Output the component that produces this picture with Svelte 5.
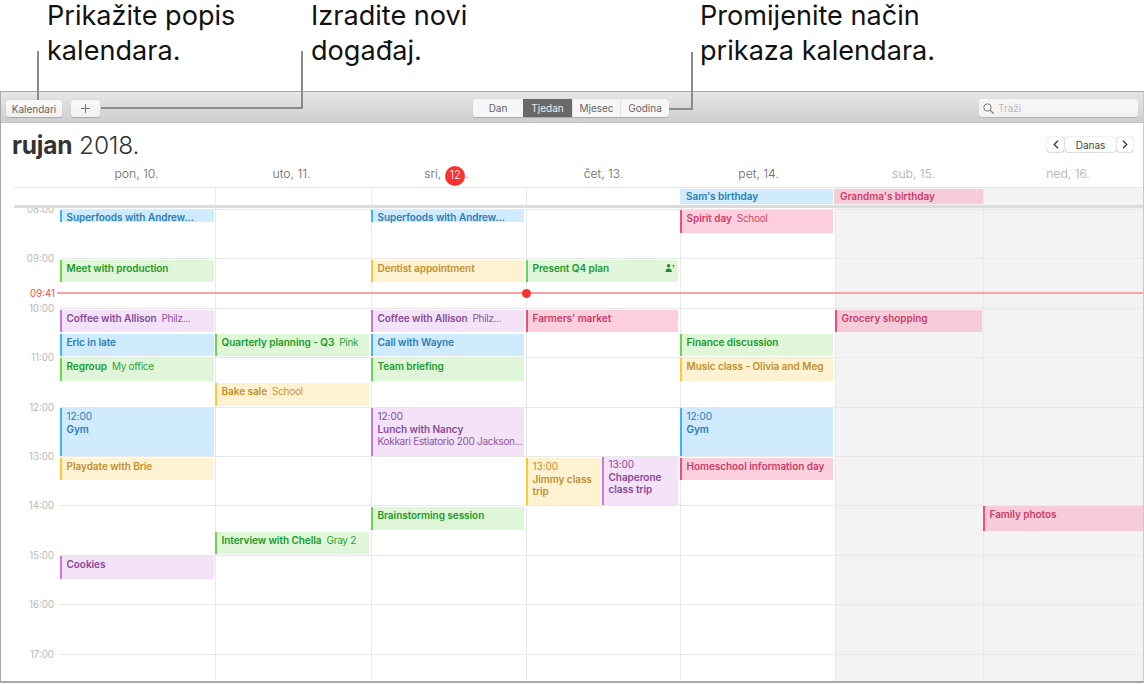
<script>
  const days = [
    { label: 'pon, 10.' },
    { label: 'uto, 11.' },
    { label: 'sri,', today: '12' },
    { label: 'čet, 13.' },
    { label: 'pet, 14.' },
    { label: 'sub, 15.', off: true },
    { label: 'ned, 16.', off: true }
  ];

  // top / bottom are window-canvas y values of each event in its day column
  const events = [
    [0, 210, 222, 'blue', 'Superfoods with Andrew...'],
    [0, 260, 282, 'green', 'Meet with production'],
    [0, 310, 332, 'purple', 'Coffee with Allison', 'Philz...'],
    [0, 334, 356, 'blue', 'Eric in late'],
    [0, 358, 381, 'green', 'Regroup', 'My office'],
    [0, 408, 456, 'blue', 'Gym', '', '12:00'],
    [0, 458, 480, 'yellow', 'Playdate with Brie'],
    [0, 556, 579, 'purple', 'Cookies'],
    [1, 334, 356, 'green', 'Quarterly planning - Q3', 'Pink'],
    [1, 383, 405.5, 'yellow', 'Bake sale', 'School'],
    [1, 532, 553.5, 'green', 'Interview with Chella', 'Gray 2'],
    [2, 210, 222, 'blue', 'Superfoods with Andrew...'],
    [2, 260, 282, 'yellow', 'Dentist appointment'],
    [2, 310, 332, 'purple', 'Coffee with Allison', 'Philz...'],
    [2, 334, 356, 'blue', 'Call with Wayne'],
    [2, 358, 381, 'green', 'Team briefing'],
    [2, 408, 456, 'purple', 'Lunch with Nancy', 'Kokkari Estiatorio 200 Jackson...', '12:00', true],
    [2, 507, 530, 'green', 'Brainstorming session'],
    [3, 260, 282, 'green', 'Present Q4 plan', '', '', false, true],
    [3, 310, 332, 'pink', "Farmers' market"],
    [4, 210, 233, 'pink', 'Spirit day', 'School'],
    [4, 334, 356, 'green', 'Finance discussion'],
    [4, 358, 381, 'yellow', 'Music class - Olivia and Meg'],
    [4, 408, 456, 'blue', 'Gym', '', '12:00'],
    [4, 458, 480, 'pink', 'Homeschool information day'],
    [5, 310, 332, 'pink wk', 'Grocery shopping'],
    [6, 506, 531, 'pink wk', 'Family photos']
  ].map(([col, y0, y1, color, title, note, time, stack, icon]) => ({
    col, top: y0 - 208, height: y1 - y0, color, title, note, time, stack, icon
  }));

  const hours = ['08:00', '09:00', '10:00', '11:00', '12:00', '13:00', '14:00', '15:00', '16:00', '17:00'];
</script>

<div class="page">
  <header class="notes">
    <p class="note n1">Prikažite popis<br />kalendara.</p>
    <p class="note n2">Izradite novi<br />događaj.</p>
    <p class="note n3">Promijenite način<br />prikaza kalendara.</p>
  </header>

  <div class="window">
    <div class="toolbar">
      <div class="left">
        <button class="btn cal">Kalendari</button>
        <button class="btn add" aria-label="Novi događaj">
          <svg width="9" height="9" viewBox="0 0 9 9"><path d="M4.5 0v9M0 4.5h9" stroke="#777" stroke-width="1" fill="none" /></svg>
        </button>
      </div>
      <div class="seg">
        <span class="s1">Dan</span>
        <span class="s2 on">Tjedan</span>
        <span class="s3">Mjesec</span>
        <span class="s4">Godina</span>
      </div>
      <div class="search">
        <svg width="11" height="11" viewBox="0 0 11 11"><circle cx="4.5" cy="4.5" r="3.7" stroke="#777" stroke-width="1" fill="none" /><path d="M7.3 7.3l3.2 3.2" stroke="#777" stroke-width="1.2" fill="none" /></svg>
        <span>Traži</span>
      </div>
    </div>

    <div class="titlerow">
      <h1><b>rujan</b> 2018.</h1>
      <div class="nav">
        <button class="nb" aria-label="Prethodni">
          <svg width="6" height="9" viewBox="0 0 6 9"><path d="M5 .8L1.2 4.500 5 8.200" stroke="#333" stroke-width="1.2" fill="none" /></svg>
        </button>
        <button class="nb danas">Danas</button>
        <button class="nb last" aria-label="Sljedeći">
          <svg width="6" height="9" viewBox="0 0 6 9"><path d="M1 .8l3.800 3.700L1 8.200" stroke="#333" stroke-width="1.2" fill="none" /></svg>
        </button>
      </div>
    </div>

    <div class="dayrow">
      <div></div>
      {#each days as d}
        <div class="dayname" class:off={d.off}>
          {d.label}{#if d.today}<span class="today">{d.today}</span>.{/if}
        </div>
      {/each}
    </div>

    <div class="cols allday">
      <div></div>
      {#each days as d, i}
        <div class="adcell c{i}" class:weekend={d.off}>
          {#if i === 4}<div class="adev sam blue">Sam's birthday</div>{/if}
          {#if i === 5}<div class="adev gran pink wk">Grandma's birthday</div>{/if}
        </div>
      {/each}
    </div>

    <div class="grid">
      <div class="cols daycols">
        <div class="gutter">
          {#each hours as h}<div class="tlabel">{h}</div>{/each}
        </div>
        {#each days as d, i}
          <div class="day c{i}" class:weekend={d.off}>
            {#each events.filter((e) => e.col === i) as e}
              <div class="ev {e.color}" class:short={e.height < 15} style="top:{e.top}px;height:{e.height}px">
                {#if e.time}<div class="time">{e.time}</div>{/if}
                {#if e.stack}
                  <div class="tt">{e.title}</div>
                  <div class="sub">{e.note}</div>
                {:else}
                  <div class="line"><span class="tt">{e.title}</span>{#if e.note}<span class="sub">{e.note}</span>{/if}</div>
                {/if}
                {#if e.icon}
                  <svg class="inv" width="10" height="8" viewBox="0 0 10 8">
                    <circle cx="3.6" cy="1.8" r="1.7" fill="#1f8a30" />
                    <path d="M.5 8c0-2.6 1.2-3.6 3.1-3.6S6.800 5.400 6.800 8z" fill="#1f8a30" />
                    <path d="M8.500 4V1M7.500 1.900l1-1 1 1" stroke="#1f8a30" stroke-width=".7" fill="none" />
                  </svg>
                {/if}
              </div>
            {/each}
            {#if i === 3}
              <div class="trip yellow ev"><div class="time">13:00</div><div class="tt">Jimmy class trip</div></div>
              <div class="trip2 purple ev"><div class="time">13:00</div><div class="tt">Chaperone class trip</div></div>
            {/if}
          </div>
        {/each}
      </div>
      <div class="hourlines">
        {#each hours as h}<div class="hl"></div>{/each}
      </div>
      <div class="now">
        <span class="nowt">09:41</span>
        <span class="nowdot"></span>
      </div>
    </div>
  </div>

  <i class="lead l1"></i>
  <i class="lead l2"></i>
  <i class="lead l3"></i>
</div>

<style>
  :global(body) {
    margin: 0;
    background: #fff;
  }
  .page {
    position: relative;
    width: 1144px;
    height: 684px;
    overflow: hidden;
    font-family: Inter, "Liberation Sans", sans-serif;
    color: #222;
  }
  .notes {
    height: 91px;
    display: flex;
    padding-left: 47px;
    box-sizing: border-box;
  }
  .note {
    margin: -2px 0 0;
    font-size: 27.100px;
    line-height: 35px;
    color: #111;
  }
  .n1 { width: 264px; }
  .n2 { width: 389px; }

  .lead { position: absolute; background: #8b8b8b; display: block; }
  .l1 { left: 37px; top: 51px; width: 2px; height: 49px; }
  .l2 { left: 101px; top: 51px; width: 202px; height: 58px; background: none; border-right: 2px solid #8b8b8b; border-bottom: 2px solid #8b8b8b; box-sizing: border-box; }
  .l3 { left: 669px; top: 52px; width: 24px; height: 58px; background: none; border-right: 2px solid #8b8b8b; border-bottom: 2px solid #8b8b8b; box-sizing: border-box; }

  .window {
    height: 592px;
    box-sizing: border-box;
    border-left: 1px solid #a9a9a9;
    border-bottom: 2px solid #a9a9a9;
    border-right: 1px solid #c8c8c8;
    border-top: 1px solid #a9a9a9;
    display: flex;
    flex-direction: column;
  }
  .toolbar {
    flex: none;
    height: 31px;
    box-sizing: border-box;
    padding: 8px 5px 0 5px;
    background: linear-gradient(#e6e6e6, #cfcfcf);
    border-bottom: 1px solid #c2c2c2;
    display: grid;
    grid-template-columns: 467px 196px 1fr;
    align-items: start;
  }
  .left { display: flex; gap: 9px; }
  .btn {
    height: 17px;
    padding: 0;
    border: 0;
    border-radius: 3px;
    background: linear-gradient(#fafafa, #f0f0f0);
    box-shadow: 0 0.500px 1px rgba(0,0,0,.2);
    font: 10px Inter, sans-serif;
    color: #666;
    display: flex;
    align-items: center;
    justify-content: center;
  }
  .cal { width: 56px; }
  .add { width: 29px; }
  .seg {
    display: grid;
    grid-template-columns: 50px 49px 48px 49px;
    height: 18px;
    margin-top: -1px;
    border-radius: 3px;
    overflow: hidden;
    background: #f6f6f6;
    box-shadow: 0 0.500px 1px rgba(0,0,0,.2);
    font-size: 10px;
    color: #666;
  }
  .seg span {
    display: flex;
    align-items: center;
    justify-content: center;
    border-left: 1px solid #e4e4e4;
  }
  .seg .s1 { border-left: 0; }
  .seg .on { background: #696969; color: #eee; border-left: 0; }
  .search {
    justify-self: end;
    width: 159px;
    height: 18px;
    margin-top: -1px;
    box-sizing: border-box;
    padding-left: 4px;
    display: flex;
    align-items: center;
    gap: 4px;
    border-radius: 3px;
    background: linear-gradient(#f7f7f7, #f1f1f1);
    box-shadow: 0 0.500px 1px rgba(0,0,0,.15);
    font-size: 10px;
    color: #b9b9b9;
  }
  .titlerow {
    flex: none;
    height: 36px;
    box-sizing: border-box;
    padding: 0 10px 0 11px;
    display: flex;
    justify-content: space-between;
    align-items: flex-start;
  }
  h1 {
    margin: 6px 0 0;
    font-size: 24.500px;
    line-height: 32px;
    font-weight: 300;
    color: #333;
    letter-spacing: -0.2px;
  }
  h1 b { font-weight: 700; }
  .nav { display: flex; gap: 1px; margin-top: 14px; }
  .nb {
    width: 17px;
    height: 15px;
    padding: 0;
    border: 0;
    border-radius: 3px;
    background: #fff;
    box-shadow: 0 0 1px rgba(0,0,0,.5), 0 1px 1px rgba(0,0,0,.1);
    font: 10px Inter, sans-serif;
    color: #444;
    display: flex;
    align-items: center;
    justify-content: center;
  }
  .danas { width: 51px; }
  .last { width: 16px; }

  .cols {
    display: grid;
    grid-template-columns: 59px 155px 156px 155px 154px 155px 148px 1fr;
  }
  .dayrow {
    flex: none;
    height: 28px;
    display: grid;
    grid-template-columns: 58px 155px 155px 155px 159px 151px 159px 1fr;
  }
  .dayname {
    text-align: center;
    font-size: 12.200px;
    line-height: 29px;
    color: #666;
    font-weight: 300;
    white-space: nowrap;
  }
  .dayname.off { color: #aaa; }
  .today {
    display: inline-flex;
    width: 20px;
    height: 20px;
    margin-left: 4px;
    border-radius: 50%;
    background: #fb3232;
    color: #fff;
    align-items: center;
    justify-content: center;
    font-size: 11px;
    line-height: 1;
    vertical-align: -1px;
  }
  .allday {
    flex: none;
    height: 17px;
    margin-left: 13px;
    grid-template-columns: 46px 155px 156px 155px 154px 155px 148px 1fr;
    border-top: 1px solid #e9e9e9;
    border-bottom: 3px solid #dcdcdc;
  }
  .adcell { border-left: 1px solid #e9e9e9; padding: 1px 0 0 0; }
  .adcell.c0 { border-left: 0; }
  .adcell.weekend { background: #f3f3f3; }
  .adev {
    height: 15px;
    padding-left: 6px;
    font-size: 10px;
    letter-spacing: -0.05px;
    line-height: 15px;
    font-weight: 600;
  }
  .sam { margin: 0 2px 0 -1px; }
  .gran { margin: 0 0 0 -2px; }

  .grid {
    position: relative;
    flex: 1;
    overflow: hidden;
    min-height: 0;
  }
  .daycols { height: 100%; }
  .gutter { display: flex; flex-direction: column; margin-top: -5px; }
  .tlabel {
    height: 49.400px;
    flex: none;
    box-sizing: border-box;
    padding-right: 6px;
    text-align: right;
    font-size: 9.700px;
    line-height: 14px;
    color: #b8b8b8;
  }
  .day {
    position: relative;
    border-left: 1px solid #e9e9e9;
  }
  .day.c0 { border-left: 0; }
  .day.weekend { background: #f3f3f3; }
  .hourlines {
    position: absolute;
    left: 59px;
    right: 0;
    top: 1px;
    pointer-events: none;
  }
  .hl { height: 49.400px; box-sizing: border-box; border-top: 1px solid #e9e9e9; }
  .now {
    position: absolute;
    left: 56px;
    right: 0;
    top: 84px;
    height: 2px;
    background: #f9a3a3;
    z-index: 3;
  }
  .nowt {
    position: absolute;
    right: 100%;
    top: -5px;
    width: 40px;
    text-align: right;
    padding-right: 2px;
    font-size: 9.700px;
    line-height: 14px;
    color: #fb4a4a;
  }
  .nowdot {
    position: absolute;
    left: 465px;
    top: -3.500px;
    width: 9px;
    height: 9px;
    border-radius: 50%;
    background: #fb3232;
  }

  .ev {
    position: absolute;
    z-index: 2;
    left: -1px;
    right: 2px;
    box-sizing: border-box;
    border-left: 2px solid;
    padding: 2px 0 0 4.500px;
    font-size: 10px;
    letter-spacing: -0.05px;
    line-height: 12.700px;
  }
  .c0 .ev { left: 0; right: 1px; }
  .c5 .ev { right: 1px; }
  .c6 .ev { right: 0; }
  .ev.short { padding-top: 0.500px; }
  .line { white-space: nowrap; }
  .tt { font-weight: 600; }
  .line .sub { margin-left: 5px; }
  .sub { font-weight: 400; font-size: 10px; letter-spacing: -0.3px; white-space: nowrap; opacity: .92; }
  .time { font-weight: 400; }
  .inv { position: absolute; right: 3px; top: 4px; }
  .trip { top: 250px; height: 47px; right: auto; width: 75px; }
  .trip2 { top: 249px; height: 48px; left: 75px; right: auto; width: 76px; padding-top: 1px; }

  .blue { background: #cfebfd; border-color: #42b1f6; color: #2b7db4; }
  .green { background: #dff6d8; border-color: #65d94b; color: #1b9a2b; }
  .purple { background: #f3e2f8; border-color: #c57bdd; color: #874a97; }
  .yellow { background: #fef2d3; border-color: #fcc834; color: #c1912b; }
  .pink { background: #fdcfdc; border-color: #f64b80; color: #cc3c69; }
  .wk { background: #f7ccd9; }
</style>
